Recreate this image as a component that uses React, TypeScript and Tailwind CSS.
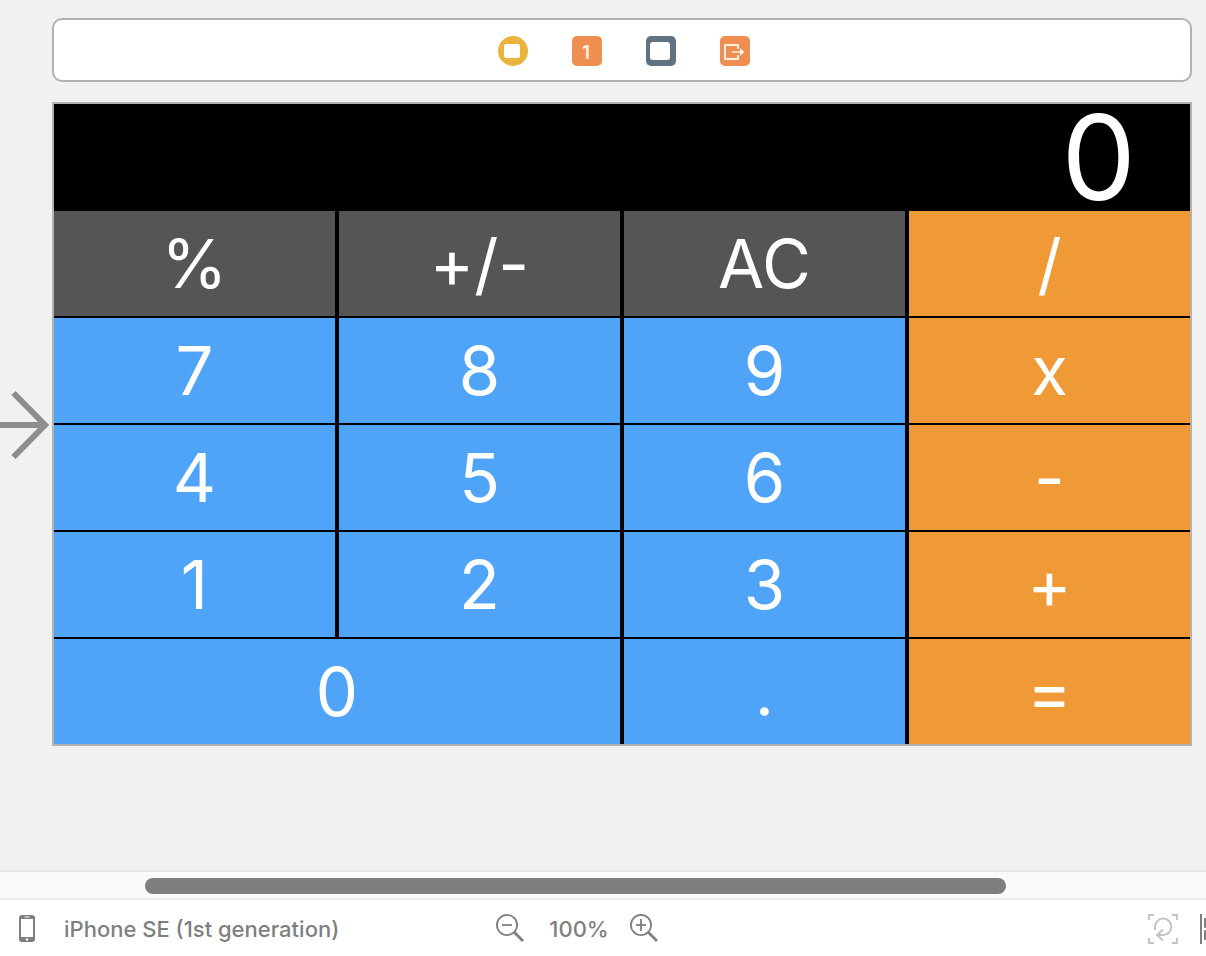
import React from "react";

type Tone = "gray" | "blue" | "orange";

type Key = { label: string; name: string; tone: Tone; wide?: boolean };

const tones: Record<Tone, string> = {
  gray: "bg-[#555555]",
  blue: "bg-[#4fa4f7]",
  orange: "bg-[#f09a37]",
};

const keys: Key[] = [
  { label: "%", name: "percent", tone: "gray" },
  { label: "+/-", name: "toggle sign", tone: "gray" },
  { label: "AC", name: "all clear", tone: "gray" },
  { label: "/", name: "divide", tone: "orange" },
  { label: "7", name: "7", tone: "blue" },
  { label: "8", name: "8", tone: "blue" },
  { label: "9", name: "9", tone: "blue" },
  { label: "x", name: "multiply", tone: "orange" },
  { label: "4", name: "4", tone: "blue" },
  { label: "5", name: "5", tone: "blue" },
  { label: "6", name: "6", tone: "blue" },
  { label: "-", name: "subtract", tone: "orange" },
  { label: "1", name: "1", tone: "blue" },
  { label: "2", name: "2", tone: "blue" },
  { label: "3", name: "3", tone: "blue" },
  { label: "+", name: "add", tone: "orange" },
  { label: "0", name: "0", tone: "blue", wide: true },
  { label: ".", name: "decimal point", tone: "blue" },
  { label: "=", name: "equals", tone: "orange" },
];

function SceneDock() {
  return (
    <div className="flex h-16 items-center justify-center gap-11 rounded-[10px] border-2 border-[#b2b2b2] bg-white pt-0.5 pl-1">
      <button type="button" aria-label="View Controller">
        <svg className="block size-[30px]" viewBox="0 0 30 30">
          <circle cx="15" cy="15" r="15" fill="#eab33e" />
          <rect x="6" y="8" width="16" height="14" rx="2.5" fill="#fff" />
        </svg>
      </button>
      <button
        type="button"
        aria-label="First Responder"
        className="flex size-[30px] items-center justify-center rounded-[5px] bg-[#ee8f51] pt-1 pr-0.5 text-lg font-semibold text-white/90"
      >
        1
      </button>
      <button type="button" aria-label="View">
        <svg className="block size-[30px]" viewBox="0 0 30 30">
          <rect width="30" height="30" rx="5" fill="#617383" />
          <rect x="4" y="6" width="20" height="18" rx="3" fill="#fff" />
        </svg>
      </button>
      <button type="button" aria-label="Exit">
        <svg className="block size-[30px]" viewBox="0 0 30 30">
          <rect width="30" height="30" rx="5" fill="#ee8f51" />
          <g fill="none" stroke="#fff" strokeOpacity="0.85" strokeWidth="2">
            <path d="M18 13V9H5v14h13v-4" />
            <path d="M12 16h10" strokeOpacity="0.6" />
          </g>
          <path d="M20 12l4.500 4-4.500 4z" fill="#fff" fillOpacity="0.8" />
        </svg>
      </button>
    </div>
  );
}

function Calculator() {
  return (
    <div className="grid grid-cols-4 gap-x-1 gap-y-0.5 border-2 border-[#b2b2b2] bg-black text-white">
      <output className="col-span-4 flex h-[105px] items-center justify-end pr-[54px] text-[118px] leading-none">
        0
      </output>
      {keys.map((key) => (
        <button
          key={key.name}
          type="button"
          aria-label={key.name}
          className={`h-[105px] text-[67px] leading-none ${tones[key.tone]} ${key.wide ? "col-span-2" : ""}`}
        >
          {key.label}
        </button>
      ))}
    </div>
  );
}

function Magnifier({ plus }: { plus?: boolean }) {
  return (
    <svg className="block size-7" viewBox="0 0 28 28" fill="none" stroke="#7f7f7f">
      <circle cx="11" cy="11" r="10.1" strokeWidth="1.8" />
      <path d="M18.5 18.5l8.5 8.5" strokeWidth="2.8" />
      <path d="M6 11h10" strokeWidth="1.8" />
      {plus && <path d="M11 5v12" strokeWidth="1.8" />}
    </svg>
  );
}

function BottomBar() {
  return (
    <footer className="flex h-[58px] items-center overflow-hidden border-t-2 border-[#ebebeb] bg-white text-[22px] font-medium text-[#7f7f7f]">
      <button type="button" className="flex w-[496px] shrink-0 items-center gap-7 pt-0.5 pl-[18px]">
        <svg className="block h-7 w-[18px]" viewBox="0 0 18 28">
          <rect x="1" y="0" width="16" height="27" rx="3" fill="#7f7f7f" />
          <rect x="3" y="4" width="12" height="18" fill="#fff" />
          <rect x="6.5" y="1.4" width="5" height="1.2" rx="0.6" fill="#fff" />
          <circle cx="9" cy="24.5" r="1.2" fill="#fff" />
        </svg>
        iPhone SE (1st generation)
      </button>
      <div className="flex shrink-0 items-center">
        <button type="button" aria-label="Zoom out">
          <Magnifier />
        </button>
        <button type="button" className="w-[106px] pt-0.5 pl-1 text-center">
          100%
        </button>
        <button type="button" aria-label="Zoom in">
          <Magnifier plus />
        </button>
      </div>
      <div className="-mr-6 ml-auto flex shrink-0 items-center gap-[22px] pt-0.5">
        <button type="button" aria-label="Update frames">
          <svg className="block size-[30px]" viewBox="0 0 30 30" fill="none" stroke="#c4c4c4" strokeWidth="2">
            <path d="M1 6V1h5M24 1h5v5M29 24v5h-5M6 29H1v-5" />
            <path d="M7 16v-3a8.200 8.200 0 1 1 8.200 8H9.500" />
            <path d="M15 15.500l-6 5.500 6 5.500" />
          </svg>
        </button>
        <button type="button" aria-label="Align">
          <svg className="block size-[30px]" viewBox="0 0 30 30" fill="#7f7f7f">
            <rect width="2" height="30" />
            <rect x="4" y="4" width="22" height="10" rx="1" />
            <rect x="4" y="16" width="14" height="10" rx="1" />
          </svg>
        </button>
      </div>
    </footer>
  );
}

export default function App() {
  return (
    <div className="flex min-h-screen flex-col bg-[#f1f1f1] font-['Inter',sans-serif]">
      <main className="grid grow grid-cols-[52px_1fr] content-start gap-y-5 pt-[18px] pr-3.5 pb-10">
        <div className="col-start-2">
          <SceneDock />
        </div>
        <svg
          className="col-start-1 block h-[70px] w-[52px] self-center"
          viewBox="0 0 52 70"
          fill="none"
          stroke="#8e8e8e"
          strokeWidth="6"
        >
          <path d="M0 36h46M13.500 4l31.500 32L13.500 68" />
        </svg>
        <Calculator />
      </main>
      <div className="border-t-2 border-[#e6e6e6] bg-[#fafafa] pt-1.5 pr-[200px] pb-1 pl-[145px]">
        <div className="h-4 rounded-full bg-[#7e7e7e]" />
      </div>
      <BottomBar />
    </div>
  );
}
